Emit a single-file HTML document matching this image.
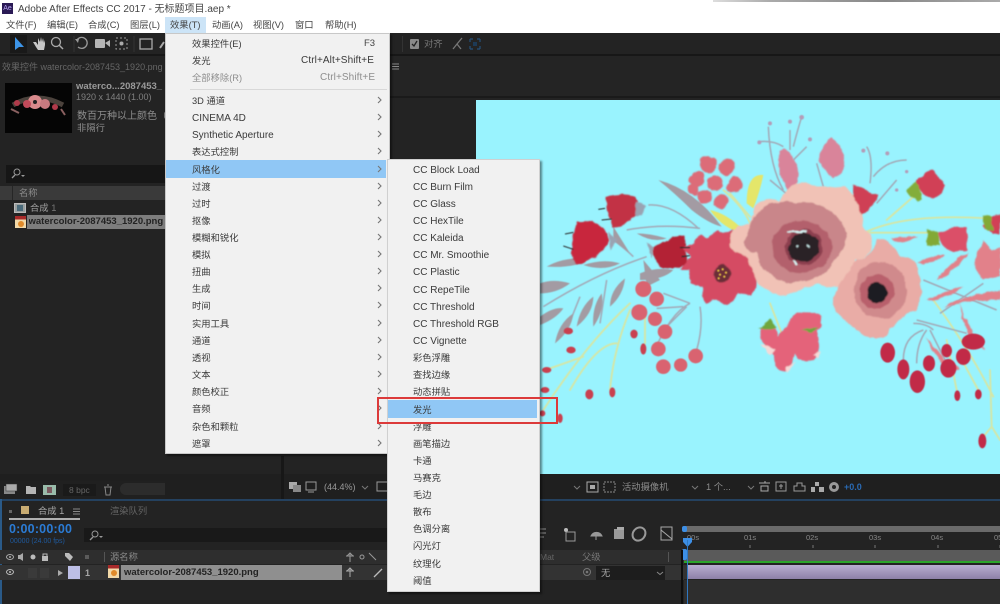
<!DOCTYPE html>
<html lang="zh"><head><meta charset="utf-8"><title>Adobe After Effects CC 2017</title>
<style>
*{box-sizing:border-box}
html,body{margin:0;padding:0;width:1000px;height:604px;overflow:hidden;background:#fff}
body{position:relative;font-family:"Liberation Sans","Noto Sans CJK SC",sans-serif;font-size:10px;color:#333;filter:blur(.3px)}
.a{position:absolute}
.t{position:absolute;white-space:nowrap;line-height:14px;height:14px}
.m{color:#3a3a3a;font-size:10px;left:192px;margin-top:1px}
.s{color:#3a3a3a;font-size:10px;left:413px;margin-top:1px}
.l{margin-top:2px}
.c{font-size:9.3px;letter-spacing:0}
.d{color:#8e8e8e}
.top{font-size:9.3px;color:#444;top:18px}
</style></head><body>
<!-- title -->
<div class="a" style="left:2px;top:3px;width:11px;height:11px;background:#2a1a55;color:#b9a5f5;font-size:7px;line-height:11px;text-align:center">Ae</div>
<div class="t" style="left:18px;top:3px;font-size:10px;color:#444">Adobe After Effects CC 2017 - 无标题项目.aep *</div>
<div class="a" style="left:713px;top:0;width:287px;height:2px;background:linear-gradient(90deg,#ddd,#aaa 20%,#888 60%,#aaa)"></div>
<div class="t top" style="left:6px">文件(F)</div>
<div class="t top" style="left:47px">编辑(E)</div>
<div class="t top" style="left:88px">合成(C)</div>
<div class="t top" style="left:130px">图层(L)</div>
<div class="a" style="left:165px;top:17px;width:41px;height:16px;background:#cce4f7"></div>
<div class="t top" style="left:170px">效果(T)</div>
<div class="t top" style="left:212px">动画(A)</div>
<div class="t top" style="left:253px">视图(V)</div>
<div class="t top" style="left:295px">窗口</div>
<div class="t top" style="left:325px">帮助(H)</div>

<!-- dark app -->
<div class="a" style="left:0;top:33px;width:1000px;height:571px;background:#232323"></div>
<div class="a" style="left:0;top:54px;width:1000px;height:2px;background:#171717"></div>
<!-- toolbar icons -->
<svg class="a" style="left:0;top:33px" width="165" height="22" viewBox="0 0 165 22">
<rect x="10" y="2" width="17" height="18" fill="#191919"/>
<path d="M15 4v13l4-3 5 0z" fill="#3d95e8"/>
<path d="M33 9l3 5 2 3h6l1-5v-5l-1 3-1-5-1 4-1-5-1 5-2-4 0 7-2-3z" fill="#c8c8c8"/>
<circle cx="56" cy="9" r="4.5" fill="none" stroke="#aaa" stroke-width="1.3"/><path d="M59 12l4 4" stroke="#aaa" stroke-width="1.5"/>
<path d="M77 7a5.5 5.5 0 1 1 1 7" fill="none" stroke="#999" stroke-width="1.3"/><path d="M75 6l4 0-1 4z" fill="#999"/>
<rect x="95" y="6" width="10" height="9" rx="1" fill="#b5b5b5"/><path d="M105 10l5-3v7z" fill="#b5b5b5"/>
<rect x="116" y="5" width="11" height="11" fill="none" stroke="#999" stroke-dasharray="2 2"/><circle cx="121.500" cy="10.500" r="2" fill="#aaa"/>
<rect x="140" y="6" width="12" height="10" fill="none" stroke="#aaa" stroke-width="1.3"/>
<path d="M160 15l4-6" stroke="#aaa" stroke-width="2"/>
<path d="M74 3v16M134 3v16" stroke="#333"/>
</svg>
<svg class="a" style="left:400px;top:33px" width="90" height="22" viewBox="0 0 90 22">
<path d="M2.500 3v16" stroke="#333"/>
<rect x="10" y="6" width="9" height="10" rx="1" fill="#8a8a8a"/><path d="M12 11l2 2 3-5" stroke="#222" stroke-width="1.300" fill="none"/>
<path d="M53 16l4-5 4 5M57 11l5-6" stroke="#777" stroke-width="1.300" fill="none"/>
<path d="M70 6h3M77 6h3M70 16h3M77 16h3M70 6v3M80 6v3M70 13v3M80 13v3" stroke="#24507a" stroke-width="1.200"/><rect x="73" y="9" width="4" height="4" fill="#1d3a56"/>
</svg>
<div class="t" style="left:424px;top:37px;font-size:9.300px;color:#777">对齐</div>

<!-- panel dividers -->
<div class="a" style="left:390px;top:56px;width:610px;height:40px;background:#242424"></div>
<div class="a" style="left:390px;top:96px;width:610px;height:2px;background:#1a1a1a"></div>
<svg class="a" style="left:392px;top:63px" width="8" height="8"><path d="M0 1h7M0 3.500h7M0 6h7" stroke="#888"/></svg>

<!-- left panel -->
<div class="t" style="left:2px;top:60px;font-size:9px;color:#666">效果控件 watercolor-2087453_1920.png</div>
<div class="a" style="left:5px;top:83px;width:67px;height:50px;background:#050505"></div>
<svg class="a" style="left:5px;top:83px" width="67" height="50" viewBox="0 0 67 50">
<path d="M8 22q24-14 50 0" stroke="#7a6a60" stroke-width="5" fill="none" opacity=".6"/>
<circle cx="30" cy="19" r="7" fill="#d88a8c"/><circle cx="40" cy="21" r="5" fill="#c87a80"/><circle cx="22" cy="21" r="4" fill="#c04a5a"/>
<circle cx="12" cy="20" r="3" fill="#b03a4a"/><circle cx="50" cy="24" r="3" fill="#b03a4a"/><circle cx="30" cy="19" r="2" fill="#222"/>
<path d="M6 26l8 4M56 26l4 6" stroke="#8a6060" stroke-width="2"/>
</svg>
<div class="t" style="left:76px;top:80px;font-size:9.500px;font-weight:bold;color:#9a9a9a;width:89px;overflow:hidden">waterco...2087453_</div>
<div class="t" style="left:76px;top:90px;font-size:9px;color:#808080">1920 x 1440 (1.00)</div>
<div class="t" style="left:77px;top:110px;font-size:10px;color:#8f8f8f;width:88px;overflow:hidden">数百万种以上颜色（</div>
<div class="t" style="left:77px;top:121px;font-size:9.300px;color:#8f8f8f">非隔行</div>
<div class="a" style="left:6px;top:165px;width:159px;height:18px;background:#161616"></div>
<svg class="a" style="left:10px;top:167px" width="16" height="13"><circle cx="7" cy="5" r="3" fill="none" stroke="#999"/><path d="M5 8l-3 3" stroke="#999" stroke-width="1.300"/><path d="M11 8h4l-2 2z" fill="#999"/></svg>
<div class="a" style="left:0;top:186px;width:165px;height:14px;background:#3a3a3a"></div>
<div class="a" style="left:12px;top:186px;width:1px;height:14px;background:#262626"></div>
<div class="t" style="left:19px;top:186px;font-size:9.300px;color:#8c8c8c">名称</div>
<div class="a" style="left:14px;top:203px;width:12px;height:10px;background:#9aa0a0;border:1px solid #bbb"></div>
<div class="a" style="left:17px;top:205px;width:6px;height:6px;background:#4a6a7a"></div>
<div class="t" style="left:30px;top:201px;font-size:9.300px;color:#a0a0a0">合成 <span style="color:#777">1</span></div>
<div class="a" style="left:27px;top:215px;width:138px;height:14px;background:#7d7d7d"></div>
<svg class="a" style="left:15px;top:216px" width="12" height="13"><rect width="11" height="12" fill="#f2d9a8"/><rect width="11" height="3.500" fill="#a82a2a"/><circle cx="6" cy="8" r="3" fill="#e08a2a"/></svg>
<div class="t" style="left:28.500px;top:215px;font-size:9.500px;font-weight:bold;color:#222;width:137px;overflow:hidden">watercolor-2087453_1920.png</div>

<!-- bottom left bar -->
<div class="a" style="left:0;top:474px;width:1000px;height:26px;background:#1f1f1f"></div>
<div class="a" style="left:0;top:481px;width:165px;height:18px;background:#202020"></div>
<svg class="a" style="left:3px;top:483px" width="165" height="14" viewBox="0 0 165 14">
<rect x="1" y="3" width="11" height="8" fill="#888"/><rect x="3" y="1" width="11" height="7" fill="#aaa" stroke="#333" stroke-width=".5"/>
<path d="M23 3h4l1 1h5v7H23z" fill="#b5b5b5"/>
<rect x="40" y="2" width="13" height="10" fill="#9ba"/><rect x="44" y="4" width="5" height="6" fill="#7a5a60"/>
<rect x="60" y="1" width="33" height="12" fill="#1a1a1a"/>
<path d="M101 4h8M102 4l1 8h4l1-8M104 2h2" stroke="#888" fill="none"/>
</svg>
<div class="t" style="left:69px;top:483px;font-size:8.500px;color:#666">8 bpc</div>
<div class="a" style="left:120px;top:483px;width:45px;height:12px;background:#2c2c2c;border-radius:6px 0 0 6px"></div>
<div class="a" style="left:281px;top:456px;width:3px;height:44px;background:#171717"></div>

<!-- preview -->
<div class="a" style="left:476px;top:100px;width:524px;height:374px;background:#99f3fe"></div>
<svg class="a" style="left:530px;top:110px" width="470" height="360" viewBox="0 0 1410 1080">
<defs>
<filter id="b" x="-5%" y="-5%" width="110%" height="110%"><feTurbulence type="fractalNoise" baseFrequency=".03" numOctaves="3" seed="4" result="n"/><feDisplacementMap in="SourceGraphic" in2="n" scale="16" xChannelSelector="R" yChannelSelector="G"/><feGaussianBlur stdDeviation="2"/></filter>
<filter id="c" x="-5%" y="-5%" width="110%" height="110%"><feGaussianBlur stdDeviation="1.800"/></filter>
</defs>
<g filter="url(#c)">
<!-- stems yellow -->
<g fill="none" stroke="#d6e6a4" stroke-width="5.500" stroke-linecap="round">
<path d="M40 900Q170 700 300 580"/><path d="M120 840Q200 700 260 700"/><path d="M240 840Q250 720 300 600"/><path d="M60 775l100-35"/>
<path d="M1010 365Q1130 310 1370 325M1010 368l190 0M1070 330l80-70"/>
<path d="M345 620v80M1210 570Q1320 720 1390 860M1380 780l5 170M1385 950l-25 30M1385 950l25 40M1250 690l30 150M1290 740l55 100"/>
<path d="M580 240Q640 290 660 340M600 250l60 70M720 580l35 90"/>
</g>
<path d="M650 280q0-90 50-85-10 50-30 100zM540 300q50 10 100 60l-20 5q-50-20-80-65z" fill="#e4e66a"/>
<!-- grey twigs -->
<g fill="none" stroke="#a3a8b6" stroke-width="4.500">
<path d="M355 285q70-5 150 70M290 360q100-20 220-5M250 390q40 30 60 50M40 590Q200 490 350 440M230 510l-20 130M150 560l-40 100M480 580q-60 30-110 150M510 590q10 60-10 130M470 590l-60 60M460 590l-80 5M480 580l-80-30"/>
<path d="M1180 510l220 90M1230 610l130-90M1150 640q40 0 60 20M1120 750q0-70 60-90M1190 660q-30 40-30 100M1200 660l50 100M1160 630l150 40"/>
<path d="M760 240Q720 170 715 50M790 110q10-40 25-90M760 110q-30-20-75-15M830 110l-40 40M780 60v60M880 230l-20 -70M1020 220q10-80-10-110M1030 200q40-50 100-50M1040 280l60-70M780 260l-60-50"/>
</g>
<g fill="#b49cb8"><circle cx="720" cy="40" r="6"/><circle cx="780" cy="35" r="6"/><circle cx="815" cy="22" r="7"/><circle cx="688" cy="97" r="6"/><circle cx="840" cy="88" r="6"/><circle cx="1000" cy="122" r="6"/><circle cx="1072" cy="130" r="6"/><circle cx="1130" cy="185" r="5"/><circle cx="1100" cy="240" r="5"/></g>
<g fill="#a39ba3">
<path d="M385 210q110 30 190 140-40-10-90-50-50-50-100-90zM50 470q50-30 130-25-40 30-130 25zM30 520q40-15 90 0-40 30-90 30zM30 620q40-30 70-25-20 30-70 50zM160 465q60-20 110-5-50 25-110 5zM330 490q50-20 100-10-30 30-100 30zM250 350l50 80-50-40zM320 370q40 0 90 15-40 15-90-15zM75 700q10-60 55-90-5 50-55 90zM140 650q10-60 50-90 0 50-50 90zM190 650q-5-60 25-100 10 50-25 100zM240 590q0-50 45-85-5 50-45 85zM340 450q50 60 50 60l-40 20z"/>
</g>
</g>
<g filter="url(#b)">
<!-- red tulips left -->
<path d="M225 260q50-15 90 0 25 25 10 50-40 40-75 40-25-50-25-90z" fill="#c23345"/><path d="M320 275l30 10-15 30-20 5z" fill="#9aa3b2"/>
<path d="M140 335q60-10 90 35 15 30-10 50-40 35-80 40-20-20-15-60z" fill="#c8283d"/><path d="M235 365l25 25-20 30z" fill="#9aa3b2"/>
<path d="M370 410q50-30 95-30l5 80q-40 25-75 15-30-30-25-65z" fill="#b32335"/><path d="M350 400l20 10-5 40z" fill="#9aa3b2"/>
<!-- daisy -->
<path d="M510 370l25 15 25-25 20 10 30-10 20 20 30 0-10 50 20 40 10 50-15 40-40-10-30 35-40-15-30 10-10-50-30-10-5-40-30 0 30-40-20-30 30-10z" fill="#d54c63"/>
<circle cx="575" cy="492" r="27" fill="#6a2d38"/>
<!-- berry clusters -->
<g fill="#dc6c78"><circle cx="535" cy="165" r="25"/><circle cx="590" cy="170" r="24"/><circle cx="500" cy="207" r="23"/><circle cx="555" cy="220" r="24"/><circle cx="615" cy="225" r="23"/><circle cx="490" cy="240" r="18"/><circle cx="525" cy="260" r="22"/><circle cx="575" cy="275" r="21"/></g>
<!-- buds top -->
<path d="M750 125q30-20 50 35 20 50-25 85-35-60-25-120zM905 85q40 30 40 60 0 40-35 60-45-30-40-70 5-35 35-50z" fill="#d9849a"/>
<!-- main flower -->
<path d="M670 300q20-40 80-30 20-40 60-55 70 20 90 15 50-10 80 40 30 40 15 80 35 30 30 70-20 30-50 30 10 50-30 70-30 25-80 0-60 20-100 40-50-10-80-40-20-30-30-80-60-20-55-50-5-30 60-50 0-20 10-30z" fill="#f1c2b6"/>
<path d="M680 310q60-50 120-30 80-10 130 50 40 60-10 110-20 50-80 70-60 20-110-10-50-30-50-70-50-10-30-50 10-50 30-70z" fill="#c9868a"/>
<ellipse cx="815" cy="410" rx="90" ry="78" fill="#b3606c"/>
<ellipse cx="822" cy="412" rx="56" ry="54" fill="#8d4150"/>
<ellipse cx="822" cy="412" rx="46" ry="44" fill="#2a2126"/>
<path d="M770 365h60M790 450l10 15M830 405l5 5M800 410l5 5" stroke="#dff" stroke-width="5"/>
<!-- second flower -->
<path d="M980 450q50-10 60-60 50 0 70 50 50 0 60 60 10 60-10 100-60 20-90 80-60 20-100-30-50-30-60-70 10-60 70-130z" fill="#e9aca6"/>
<ellipse cx="1050" cy="540" rx="80" ry="85" fill="#d08a8c"/>
<ellipse cx="1040" cy="545" rx="52" ry="52" fill="#b9606c"/>
<ellipse cx="1040" cy="548" rx="31" ry="31" fill="#1d1f22"/>
<!-- lower buds -->
<path d="M690 650q40-20 55 30 30-40 50-70 50-10 80 10 0 30-15 40 15 50-5 90-50 10-60-20-10 40-30 55-40-10-35-50-40-30-40-85z" fill="#e4647a"/>
<path d="M690 700l30 35 20-15zM770 770l30-20-30 35zM850 735l20-10-5 20z" fill="#f6d9d7"/>
<path d="M680 655q20-10 40-30l20 30zM815 660l50-10-20 18z" fill="#6fa63c"/>
<!-- right flowers -->
<path d="M1160 215q20-30 45-35 20 20 40 45-10 30-35 40-40-5-50-50z" fill="#d13f56"/><path d="M1130 240l30-25 20 55-20 5z" fill="#83ad3a"/>
<path d="M970 225q40 10 75 30-10 40-50 55-30-40-25-85z" fill="#cf3f54"/>
<path d="M1225 370q40-25 85-20l5 70-45 5q-40-10-45-55z" fill="#db5068"/><path d="M1195 360l30 10 5 40-40-5z" fill="#82a936"/>
<path d="M1385 320l25-10v60l-25 5-25-30z" fill="#d13f56"/><path d="M1355 315l30 5 5 45-20-5z" fill="#82a936"/>
<!-- pink leaves right -->
<g fill="#e2818a"><path d="M1160 460q50-25 85-25-30 30-85 25zM1220 510q40-50 95-85-30 60-95 85zM1190 570q60-30 110-40-50 40-110 40zM1240 590q80-40 170-50v30q-90 0-170 20zM1190 680q40 60 100 100l-30 0q-50-40-70-100zM1290 580q20 80 80 140l-25-10q-50-50-55-130zM1330 460l30-70 25 30 25-10v90l-50 10z"/><path d="M1080 385q50-10 80-5-50 30-80 5z"/></g>
</g>
<g filter="url(#c)">
<g fill="#e0c040"><circle cx="565" cy="482" r="3.500"/><circle cx="578" cy="478" r="3.500"/><circle cx="588" cy="488" r="3.500"/><circle cx="570" cy="494" r="3.500"/><circle cx="583" cy="500" r="3.500"/><circle cx="566" cy="505" r="3.500"/></g>
<path d="M205 298l20-3M215 330l30-3M105 372l25-5M100 408l30 10M450 413l30 0M455 440l25-3" stroke="#2a2a2a" stroke-width="3"/>
<!-- red berries -->
<g fill="#c12c46"><ellipse cx="1073" cy="728" rx="22" ry="30"/><ellipse cx="1120" cy="778" rx="18" ry="30"/><ellipse cx="1162" cy="815" rx="23" ry="34"/><ellipse cx="1197" cy="760" rx="18" ry="24"/><ellipse cx="1255" cy="775" rx="24" ry="28"/><ellipse cx="1300" cy="740" rx="22" ry="25"/><ellipse cx="1250" cy="722" rx="16" ry="20"/><ellipse cx="1330" cy="695" rx="35" ry="24"/><ellipse cx="1282" cy="857" rx="9" ry="16"/><ellipse cx="1345" cy="853" rx="10" ry="15"/><ellipse cx="1357" cy="993" rx="12" ry="22"/></g>
<!-- pink berries -->
<g fill="#d9636f"><circle cx="340" cy="537" r="24"/><circle cx="380" cy="567" r="22"/><circle cx="328" cy="607" r="24"/><circle cx="375" cy="627" r="21"/><circle cx="405" cy="665" r="22"/><circle cx="385" cy="717" r="22"/><circle cx="400" cy="770" r="22"/><circle cx="452" cy="765" r="20"/><circle cx="497" cy="738" r="22"/></g>
<g fill="#c9404f"><ellipse cx="115" cy="663" rx="14" ry="10"/><ellipse cx="123" cy="720" rx="14" ry="10"/><ellipse cx="312" cy="672" rx="11" ry="13"/><ellipse cx="340" cy="717" rx="9" ry="17"/><ellipse cx="50" cy="780" rx="14" ry="9"/><ellipse cx="45" cy="840" rx="13" ry="9"/><ellipse cx="178" cy="853" rx="12" ry="15"/><ellipse cx="247" cy="847" rx="9" ry="15"/><ellipse cx="37" cy="910" rx="9" ry="9"/><ellipse cx="90" cy="925" rx="8" ry="14"/></g>
</g>
</svg>

<!-- viewer bar -->
<svg class="a" style="left:285px;top:478px" width="300" height="20" viewBox="0 0 300 20">
<rect x="4" y="4" width="8" height="7" fill="#aaa"/><rect x="8" y="7" width="8" height="7" fill="#888"/>
<rect x="21" y="4" width="10" height="8" fill="none" stroke="#999"/><path d="M23 14h6" stroke="#999"/>
<path d="M77 8l3 3 3-3" stroke="#777" fill="none"/>
<rect x="92" y="4" width="11" height="9" fill="none" stroke="#999"/>
</svg>
<div class="t" style="left:324px;top:480px;font-size:9px;color:#9a9a9a">(44.4%)</div>
<svg class="a" style="left:540px;top:478px" width="300" height="20" viewBox="0 0 300 20">
<path d="M34 8l3 3 3-3M152 8l3 3 3-3M208 8l3 3 3-3" stroke="#777" fill="none"/>
<rect x="47" y="4" width="11" height="10" fill="none" stroke="#aaa"/><rect x="50" y="7" width="5" height="4" fill="#aaa"/>
<rect x="64" y="4" width="11" height="10" fill="none" stroke="#888" stroke-dasharray="2 1"/>
<path d="M219 5h11M221 8h7v5h-7zM225 3v2" stroke="#aaa" fill="none"/>
<rect x="236" y="4" width="10" height="9" fill="none" stroke="#999"/><path d="M239 8h4M241 6v5" stroke="#999"/>
<path d="M254 13h11v-5h-3v-3h-5v3h-3z" fill="none" stroke="#999"/>
<path d="M275 4h4v4h-4zM271 9h4v5h-4zM279 9h5v5h-5z" fill="#aaa"/>
<circle cx="294" cy="9" r="5" fill="#999"/><circle cx="294" cy="9" r="2" fill="#222"/>
</svg>
<div class="t" style="left:622px;top:480px;font-size:9.300px;color:#8c8c8c">活动摄像机</div>
<div class="t" style="left:706px;top:480px;font-size:9.300px;color:#8c8c8c">1 个...</div>
<div class="t" style="left:844px;top:480px;font-size:9px;font-weight:bold;color:#2a6bb5">+0.0</div>

<!-- timeline -->
<div class="a" style="left:0;top:499px;width:1000px;height:2px;background:#24415f"></div>
<div class="a" style="left:0;top:499px;width:2px;height:105px;background:#2a5a88"></div>
<div class="a" style="left:9px;top:510px;width:3px;height:3px;background:#666"></div>
<div class="a" style="left:21px;top:506px;width:8px;height:8px;background:#c9ac72"></div>
<div class="t" style="left:38px;top:504px;font-size:9.300px;color:#a8a8a8">合成 1</div>
<svg class="a" style="left:73px;top:508px" width="8" height="8"><path d="M0 1h7M0 3.500h7M0 6h7" stroke="#888"/></svg>
<div class="a" style="left:9px;top:518px;width:71px;height:2px;background:#b0b0b0"></div>
<div class="t" style="left:110px;top:504px;font-size:9.300px;color:#666">渲染队列</div>
<div class="t" style="left:9px;top:522px;font-size:12.500px;font-weight:bold;color:#2b7cd6;letter-spacing:.2px">0:00:00:00</div>
<div class="t" style="left:10px;top:535px;font-size:7px;color:#1f5a9e">00000 (24.00 fps)</div>
<div class="a" style="left:84px;top:528px;width:600px;height:14px;background:#191919"></div>
<svg class="a" style="left:88px;top:529px" width="16" height="13"><circle cx="7" cy="5" r="3" fill="none" stroke="#999"/><path d="M5 8l-3 3" stroke="#999" stroke-width="1.300"/><path d="M11 7h4l-2 2z" fill="#999"/></svg>
<div class="a" style="left:539px;top:520px;width:146px;height:30px;background:#232323"></div>
<svg class="a" style="left:539px;top:524px" width="145" height="22" viewBox="0 0 145 22">
<path d="M1 5h6M1 9h6M1 13h4" stroke="#888"/>
<circle cx="27" cy="6" r="2" fill="#bbb"/><rect x="27" y="8" width="9" height="9" fill="none" stroke="#999"/>
<path d="M52 12a6 6 0 0 1 11 0zM57 12v4" fill="#999" stroke="#999"/>
<rect x="75" y="5" width="10" height="10" fill="#999"/><rect x="78" y="3" width="7" height="3" fill="#aaa"/>
<ellipse cx="100" cy="10" rx="6" ry="7" fill="none" stroke="#999" stroke-width="2" transform="rotate(40 100 10)"/>
<rect x="122" y="3" width="11" height="13" fill="none" stroke="#aaa"/><path d="M122 6l11 9" stroke="#aaa"/>
</svg>
<!-- header row -->
<div class="a" style="left:0;top:550px;width:684px;height:14px;background:#2e2e2e"></div>
<svg class="a" style="left:4px;top:551px" width="120" height="13" viewBox="0 0 120 13">
<ellipse cx="6" cy="6" rx="3.500" ry="2.500" fill="none" stroke="#aaa"/><circle cx="6" cy="6" r="1" fill="#aaa"/>
<path d="M14 4h2l3-2v8l-3-2h-2z" fill="#aaa"/>
<circle cx="29" cy="6" r="2.500" fill="#bbb"/>
<rect x="38" y="5" width="6" height="5" fill="#bbb"/><path d="M39 5V3h4v2" stroke="#bbb" fill="none"/>
<path d="M61 2h4l4 4-3 4-5-5z" fill="#bbb"/>
<path d="M81 5h4M81 7h4" stroke="#888"/>
</svg>
<div class="a" style="left:104px;top:552px;width:1px;height:10px;background:#555"></div>
<div class="t" style="left:110px;top:550px;font-size:9.300px;color:#8a8a8a">源名称</div>
<svg class="a" style="left:344px;top:551px" width="40" height="13"><path d="M2 5h8M6 2v9M3 5l3-3 3 3" stroke="#999" fill="none"/><circle cx="18" cy="6" r="2" fill="none" stroke="#999"/><path d="M25 2l7 7" stroke="#999"/></svg>
<div class="t" style="left:540px;top:550px;font-size:8.500px;color:#666">Mat</div>
<div class="t" style="left:582px;top:550px;font-size:9.300px;color:#777">父级</div>
<div class="a" style="left:668px;top:552px;width:1px;height:10px;background:#555"></div>
<!-- layer row -->
<div class="a" style="left:0;top:565px;width:684px;height:15px;background:#333"></div>
<svg class="a" style="left:4px;top:566px" width="100" height="13" viewBox="0 0 100 13">
<ellipse cx="6" cy="6" rx="3.500" ry="2.500" fill="none" stroke="#bbb"/><circle cx="6" cy="6" r="1" fill="#bbb"/>
<rect x="24" y="2" width="9" height="10" fill="#3a3a3a"/><rect x="36" y="2" width="9" height="10" fill="#3a3a3a"/>
<path d="M54 4l5 3-5 3z" fill="#aaa"/>
</svg>
<div class="a" style="left:68px;top:566px;width:12px;height:13px;background:#bdbfe6"></div>
<div class="t" style="left:85px;top:566px;font-size:9px;font-weight:bold;color:#a8a8a8">1</div>
<svg class="a" style="left:108px;top:565px" width="12" height="14"><rect width="11" height="13" fill="#f2d9a8"/><rect width="11" height="3.500" fill="#a82a2a"/><circle cx="6" cy="8" r="3" fill="#e08a2a"/></svg>
<div class="a" style="left:121px;top:565px;width:221px;height:15px;background:#8f8f8f"></div>
<div class="t" style="left:124px;top:566px;font-size:9.500px;font-weight:bold;color:#222">watercolor-2087453_1920.png</div>
<svg class="a" style="left:344px;top:566px" width="40" height="13"><path d="M2 5h8M6 2v9M3 5l3-3 3 3" stroke="#aaa" fill="none"/><path d="M30 11l8-8" stroke="#bbb" stroke-width="1.300"/></svg>
<div class="a" style="left:596px;top:566px;width:69px;height:14px;background:#1d1d1d"></div>
<div class="t" style="left:601px;top:566px;font-size:9.300px;color:#a8a8a8">无</div>
<svg class="a" style="left:581px;top:566px" width="88" height="13"><circle cx="6" cy="6" r="3.500" fill="none" stroke="#777"/><circle cx="6" cy="6" r="1.300" fill="#777"/><path d="M76 6l3 2.500 3-2.500" stroke="#888" fill="none"/></svg>
<!-- time ruler -->
<div class="a" style="left:684px;top:526px;width:316px;height:6px;background:#6a6a6a"></div>
<div class="a" style="left:682px;top:526px;width:5px;height:6px;background:#3d8fe6;border-radius:2px"></div>
<div class="a" style="left:684px;top:532px;width:316px;height:18px;background:#232323"></div>
<div class="t" style="left:687px;top:531px;font-size:7.500px;color:#888">00s</div>
<div class="t" style="left:744px;top:531px;font-size:7.500px;color:#888">01s</div>
<div class="t" style="left:806px;top:531px;font-size:7.500px;color:#888">02s</div>
<div class="t" style="left:869px;top:531px;font-size:7.500px;color:#888">03s</div>
<div class="t" style="left:931px;top:531px;font-size:7.500px;color:#888">04s</div>
<div class="t" style="left:994px;top:531px;font-size:7.500px;color:#888">05s</div>
<svg class="a" style="left:682px;top:536px" width="318" height="14"><path d="M68 9v3M131 9v3M193 9v3M256 9v3M318 9v3" stroke="#777"/><path d="M1 2h9v4l-4.500 5L1 6z" fill="#3d8fe6"/></svg>
<div class="a" style="left:684px;top:550px;width:316px;height:12px;background:#5a5a5a"></div>
<div class="a" style="left:682px;top:549px;width:5px;height:11px;background:#3d8fe6;border-radius:2px"></div>
<div class="a" style="left:684px;top:561px;width:316px;height:2px;background:#2aa52a"></div>
<div class="a" style="left:684px;top:563px;width:316px;height:2px;background:#222"></div>
<div class="a" style="left:688px;top:565px;width:312px;height:14px;background:linear-gradient(#b8aed0,#8d80a8)"></div>
<div class="a" style="left:684px;top:565px;width:4px;height:14px;background:#333"></div>
<div class="a" style="left:684px;top:580px;width:316px;height:24px;background:#2e2e2e"></div>
<div class="a" style="left:681px;top:550px;width:2px;height:54px;background:#0e0e0e"></div>
<div class="a" style="left:687px;top:540px;width:1px;height:64px;background:#2f78c2"></div>

<!-- main menu -->
<div class="a" style="left:165px;top:33px;width:225px;height:421px;background:#f1f1f1;border:1px solid #c8c8c8;box-shadow:2px 2px 2px rgba(0,0,0,.45)"></div>
<div class="a" style="left:166px;top:160px;width:220px;height:18px;background:#90c7f5"></div>
<div class="a" style="left:190px;top:89px;width:197px;height:1px;background:#d8d8d8"></div>
<div class="t m c" style="top:36px">效果控件(E)</div><div class="t" style="left:364px;top:37px;color:#444;font-size:9.500px">F3</div>
<div class="t m c" style="top:53px">发光</div><div class="t" style="left:301px;top:54px;color:#3a3a3a;letter-spacing:.1px">Ctrl+Alt+Shift+E</div>
<div class="t m c d" style="top:70px">全部移除(R)</div><div class="t d" style="left:320px;top:71px;letter-spacing:.1px">Ctrl+Shift+E</div>
<div class="t m c" style="top:93px">3D 通道</div>
<div class="t m l" style="top:110px">CINEMA 4D</div>
<div class="t m l" style="top:127px">Synthetic Aperture</div>
<div class="t m c" style="top:144px">表达式控制</div>
<div class="t m c" style="top:162px">风格化</div>
<div class="t m c" style="top:179px">过渡</div>
<div class="t m c" style="top:196px">过时</div>
<div class="t m c" style="top:213px">抠像</div>
<div class="t m c" style="top:230px">模糊和锐化</div>
<div class="t m c" style="top:247px">模拟</div>
<div class="t m c" style="top:264px">扭曲</div>
<div class="t m c" style="top:281px">生成</div>
<div class="t m c" style="top:298px">时间</div>
<div class="t m c" style="top:316px">实用工具</div>
<div class="t m c" style="top:333px">通道</div>
<div class="t m c" style="top:350px">透视</div>
<div class="t m c" style="top:367px">文本</div>
<div class="t m c" style="top:384px">颜色校正</div>
<div class="t m c" style="top:401px">音频</div>
<div class="t m c" style="top:419px">杂色和颗粒</div>
<div class="t m c" style="top:436px">遮罩</div>
<svg class="a" style="left:376px;top:90px" width="8" height="360" fill="none" stroke="#777" stroke-width="1.100">
<path d="M2 7l3 3-3 3M2 24l3 3-3 3M2 41l3 3-3 3M2 58l3 3-3 3M2 76l3 3-3 3M2 93l3 3-3 3M2 110l3 3-3 3M2 127l3 3-3 3M2 144l3 3-3 3M2 161l3 3-3 3M2 178l3 3-3 3M2 195l3 3-3 3M2 212l3 3-3 3M2 230l3 3-3 3M2 247l3 3-3 3M2 264l3 3-3 3M2 281l3 3-3 3M2 298l3 3-3 3M2 315l3 3-3 3M2 333l3 3-3 3M2 350l3 3-3 3"/>
</svg>

<!-- sub menu -->
<div class="a" style="left:387px;top:159px;width:153px;height:433px;background:#f1f1f1;border:1px solid #d0d0d0;box-shadow:2px 2px 2px rgba(0,0,0,.45)"></div>
<div class="a" style="left:388px;top:400px;width:149px;height:18px;background:#90c7f5"></div>
<div class="t s l" style="top:162px">CC Block Load</div>
<div class="t s l" style="top:179px">CC Burn Film</div>
<div class="t s l" style="top:196px">CC Glass</div>
<div class="t s l" style="top:213px">CC HexTile</div>
<div class="t s l" style="top:230px">CC Kaleida</div>
<div class="t s l" style="top:247px">CC Mr. Smoothie</div>
<div class="t s l" style="top:264px">CC Plastic</div>
<div class="t s l" style="top:282px">CC RepeTile</div>
<div class="t s l" style="top:299px">CC Threshold</div>
<div class="t s l" style="top:316px">CC Threshold RGB</div>
<div class="t s l" style="top:333px">CC Vignette</div>
<div class="t s c" style="top:350px">彩色浮雕</div>
<div class="t s c" style="top:367px">查找边缘</div>
<div class="t s c" style="top:384px">动态拼贴</div>
<div class="t s c" style="top:402px">发光</div>
<div class="t s c" style="top:419px">浮雕</div>
<div class="t s c" style="top:436px">画笔描边</div>
<div class="t s c" style="top:453px">卡通</div>
<div class="t s c" style="top:470px">马赛克</div>
<div class="t s c" style="top:487px">毛边</div>
<div class="t s c" style="top:504px">散布</div>
<div class="t s c" style="top:521px">色调分离</div>
<div class="t s c" style="top:538px">闪光灯</div>
<div class="t s c" style="top:556px">纹理化</div>
<div class="t s c" style="top:573px">阈值</div>

<!-- red box -->
<div class="a" style="left:377px;top:397px;width:181px;height:27px;border:2px solid #dc3a3a"></div>
</body></html>
